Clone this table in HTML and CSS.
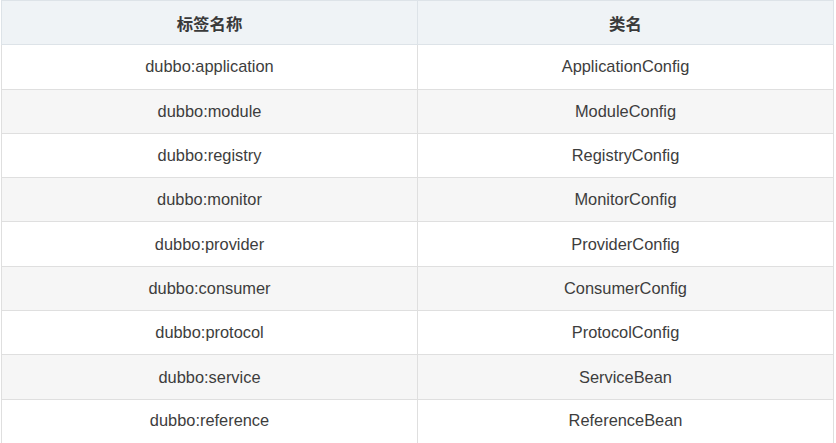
FILE: index.html
```html
<!DOCTYPE html>
<html lang="zh">
<head>
<meta charset="utf-8">
<link rel="stylesheet" href="styles.css">
</head>
<body>
<table class="cfg">
  <thead>
    <tr><th>标签名称</th><th>类名</th></tr>
  </thead>
  <tbody>
    <tr><td>dubbo:application</td><td>ApplicationConfig</td></tr>
    <tr><td>dubbo:module</td><td>ModuleConfig</td></tr>
    <tr><td>dubbo:registry</td><td>RegistryConfig</td></tr>
    <tr><td>dubbo:monitor</td><td>MonitorConfig</td></tr>
    <tr><td>dubbo:provider</td><td>ProviderConfig</td></tr>
    <tr><td>dubbo:consumer</td><td>ConsumerConfig</td></tr>
    <tr><td>dubbo:protocol</td><td>ProtocolConfig</td></tr>
    <tr><td>dubbo:service</td><td>ServiceBean</td></tr>
    <tr><td>dubbo:reference</td><td>ReferenceBean</td></tr>
  </tbody>
</table>
</body>
</html>
```
FILE: styles.css
```css
html, body {
  margin: 0;
  padding: 0;
  background: #ffffff;
}
body {
  padding-left: 1px;
  font-family: "Liberation Sans", Arial, "Noto Sans CJK SC", sans-serif;
  color: #3d3d3d;
}
.cfg {
  border-collapse: collapse;
  width: 833px;
  table-layout: fixed;
}
.cfg th, .cfg td {
  border: 1px solid #dfdfdf;
  height: 44.3px;
  padding: 0 8px;
  text-align: center;
  vertical-align: middle;
  font-size: 16.4px;
  box-sizing: border-box;
}
.cfg th {
  background: #eff3f6;
  font-weight: bold;
  color: #3a3a3a;
  font-family: "Noto Sans CJK SC", "Liberation Sans", sans-serif;
  border-color: #dde3e8;
}
.cfg tbody tr:nth-child(even) td {
  background: #f6f6f6;
}
.cfg tbody tr:last-child td {
  height: 46px;
  padding-bottom: 4px;
}
```
